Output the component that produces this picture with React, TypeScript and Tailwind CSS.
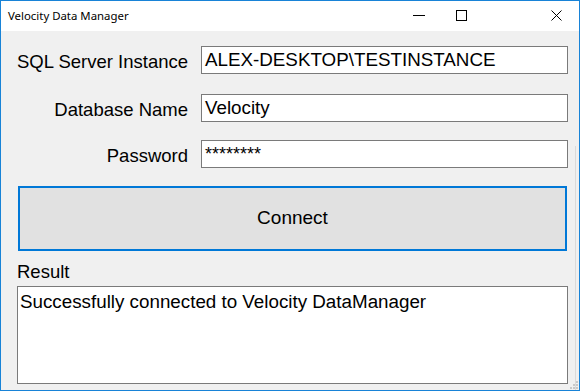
import React from "react";

const font = { fontFamily: '"Liberation Sans", Arial, sans-serif' };

export default function App() {
  return (
    <div className="relative w-[580px] h-[391px] border border-[#1883d7] bg-[#f0f0f0] flex flex-col overflow-hidden text-black">
      {/* Title bar */}
      <div className="h-[30px] bg-white flex items-center shrink-0">
        <span className="pl-[7px] text-[11.4px] text-black" style={{ fontFamily: '"Noto Sans", "Open Sans", sans-serif' }}>
          Velocity Data Manager
        </span>
        <div className="flex-1" />
        <svg width="12" height="12" viewBox="0 0 12 12" className="block">
          <line x1="0" y1="5.5" x2="12" y2="5.5" stroke="#000" strokeWidth="1" />
        </svg>
        <svg width="11" height="12" viewBox="0 0 11 12" className="block ml-[31px]">
          <rect x="0.5" y="0.5" width="10" height="10" fill="none" stroke="#000" strokeWidth="1" />
        </svg>
        <svg width="11" height="12" viewBox="0 0 11 12" className="block ml-[84px] mr-[17px]">
          <line x1="0.5" y1="0.5" x2="10.5" y2="10.5" stroke="#000" strokeWidth="1" />
          <line x1="10.5" y1="0.5" x2="0.5" y2="10.5" stroke="#000" strokeWidth="1" />
        </svg>
      </div>

      {/* Content */}
      <div className="flex-1 flex min-h-0">
        <div className="flex-1 flex flex-col pl-[16px] pr-[7px] pt-[15px]" style={font}>
          <div className="grid grid-cols-[171px_1fr] gap-x-[13px] text-[18.5px]">
            <div className="h-[28px] leading-[28px] pt-[2px] text-right whitespace-nowrap">SQL Server Instance</div>
            <div className="h-[28px] border border-[#7a7a7a] bg-white pl-[3px] leading-[26px] text-[18.8px] whitespace-nowrap">ALEX-DESKTOP\TESTINSTANCE</div>

            <div className="mt-[20px] h-[28px] leading-[28px] pt-[2px] text-right whitespace-nowrap">Database Name</div>
            <div className="mt-[20px] h-[28px] border border-[#7a7a7a] bg-white pl-[3px] leading-[26px] text-[18.8px] whitespace-nowrap">Velocity</div>

            <div className="mt-[18px] h-[28px] leading-[28px] pt-[2px] text-right whitespace-nowrap">Password</div>
            <div className="mt-[18px] h-[28px] border border-[#7a7a7a] bg-white pl-[3px] leading-[26px] text-[18px] whitespace-nowrap">********</div>
          </div>

          <div className="mt-[18px] mx-[1px] h-[65px] border-2 border-[#0078d7] bg-[#e1e1e1] flex items-center justify-center text-[19px]">
            Connect
          </div>

          <div className="mt-[10px] h-[21px] leading-[21px] text-[18.5px]">Result</div>

          <div className="mt-[4px] h-[98px] border border-[#7a7a7a] bg-white pl-[2px] pt-[4px] text-[18.8px] leading-[21px] whitespace-nowrap">
            Successfully connected to Velocity DataManager
          </div>
        </div>
        <div className="w-[4px] mt-[115px] border-l border-[#dadada] bg-[#f0f0f0]" />
      </div>

      {/* Size grip */}
      <svg width="8" height="8" viewBox="0 0 8 8" className="absolute right-[1px] bottom-[1px]">
        <rect x="6" y="0" width="2" height="2" fill="#c8c8c8" />
        <rect x="3" y="3" width="2" height="2" fill="#c8c8c8" />
        <rect x="6" y="3" width="2" height="2" fill="#c8c8c8" />
        <rect x="0" y="6" width="2" height="2" fill="#c8c8c8" />
        <rect x="3" y="6" width="2" height="2" fill="#c8c8c8" />
        <rect x="6" y="6" width="2" height="2" fill="#c8c8c8" />
      </svg>
    </div>
  );
}
